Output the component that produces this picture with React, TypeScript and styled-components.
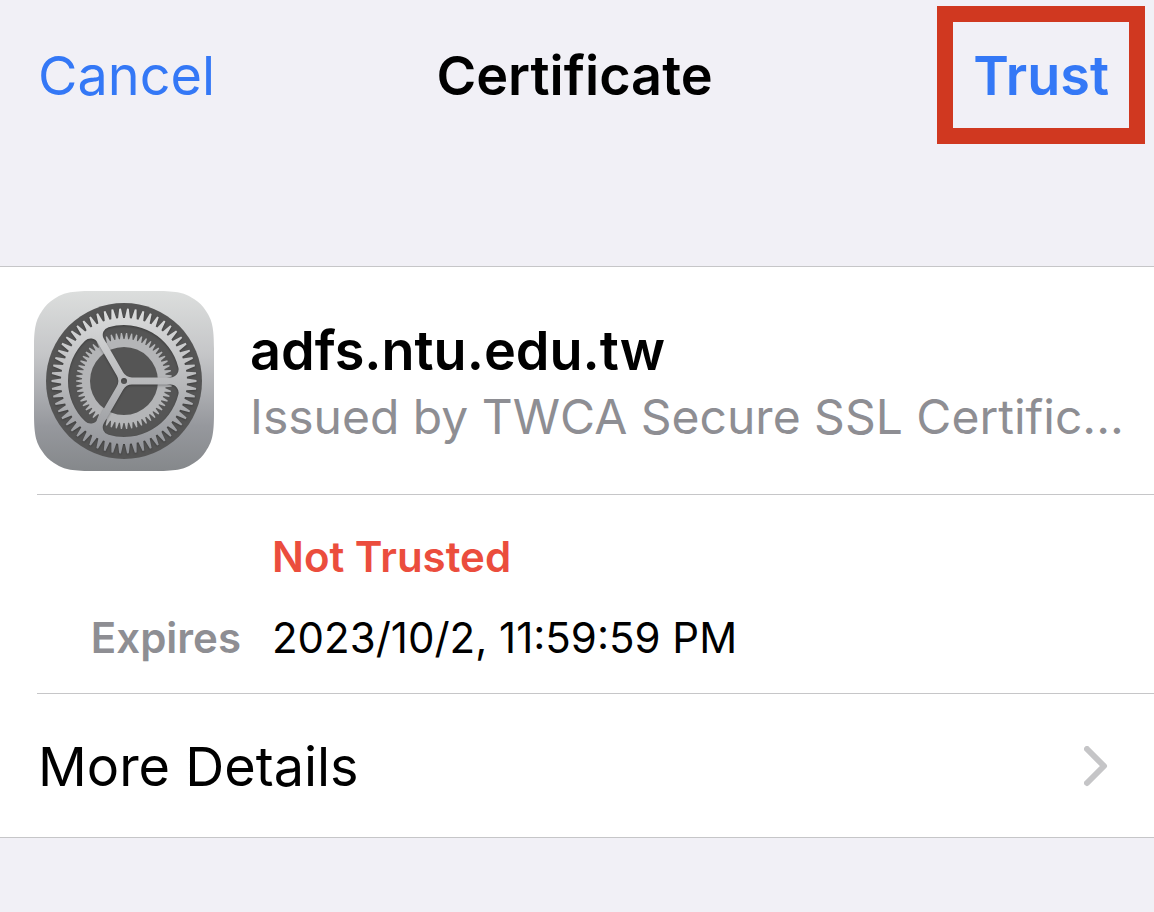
import React from "react";
import styled, { createGlobalStyle } from "styled-components";

const GlobalStyle = createGlobalStyle`
  * { box-sizing: border-box; }
  body {
    margin: 0;
    background: #f1f0f6;
    color: #000;
    font-family: Inter, "Liberation Sans", sans-serif;
  }
  button {
    font: inherit;
    border: 0;
    padding: 0;
    background: none;
    cursor: pointer;
  }
  h1, h2, p, dl, dd { margin: 0; }
`;

const Page = styled.main`
  min-height: 100vh;
`;

const NavBar = styled.header`
  display: grid;
  grid-template-columns: 1fr auto 1fr;
  align-items: center;
  padding: 6px 9px 122px 4px;
  font-size: 54px;
  line-height: 68px;
`;

const NavTitle = styled.h1`
  padding-top: 2px;
  font-size: 54px;
  font-weight: 600;
`;

const CancelButton = styled.button`
  && {
    justify-self: start;
    padding: 2px 0 0 34px;
    color: #3478f6;
  }
`;

const TrustButton = styled.button`
  && {
    justify-self: end;
    padding: 20px 20px 18px;
    border: 16px solid #d03820;
    color: #3478f6;
    font-weight: 600;
  }
`;

const Card = styled.section`
  background: #fff;
  border: solid #c6c6c8;
  border-width: 1px 0;
`;

const Summary = styled.div`
  display: flex;
  align-items: center;
  gap: 36px;
  padding: 24px 24px 23px 34px;
`;

const SummaryText = styled.div`
  min-width: 0;
  flex: 1;
  padding-top: 4px;
`;

const Host = styled.h2`
  font-size: 54px;
  line-height: 68px;
  font-weight: 600;
`;

const Issuer = styled.p`
  overflow: hidden;
  color: #8e8e93;
  font-size: 48px;
  line-height: 64px;
  text-overflow: ellipsis;
  white-space: nowrap;
`;

const Facts = styled.dl`
  display: grid;
  grid-template-columns: 204px 1fr;
  column-gap: 31px;
  row-gap: 29px;
  margin-left: 37px;
  padding: 36px 0 29px;
  border: solid #c6c6c8;
  border-width: 1px 0;
  font-size: 42px;
  line-height: 52px;
`;

const FactName = styled.dt`
  color: #8e8e93;
  font-weight: 600;
  text-align: right;
`;

const FactValue = styled.dd<{ $alert?: boolean }>`
  grid-column: 2;
  color: ${(p) => (p.$alert ? "#eb4d3d" : "#000")};
  font-weight: ${(p) => (p.$alert ? 600 : 400)};
`;

const MoreButton = styled.button`
  && {
    display: flex;
    align-items: center;
    justify-content: space-between;
    width: 100%;
    padding: 39px 46px 36px 38px;
    font-size: 54px;
    line-height: 68px;
    text-align: left;
  }
`;

const rad = (deg: number) => (deg * Math.PI) / 180;
const point = (r: number, deg: number) =>
  `${(r * Math.cos(rad(deg))).toFixed(2)} ${(r * Math.sin(rad(deg))).toFixed(2)}`;

/** Outline of a toothed wheel: `root` and `tip` are radii, the halves are angles. */
function wheel(count: number, root: number, tip: number, rootHalf: number, tipHalf: number) {
  const points: string[] = [];
  for (let i = 0; i < count; i++) {
    const a = (i * 360) / count;
    points.push(
      point(root, a - rootHalf),
      point(tip, a - tipHalf),
      point(tip, a + tipHalf),
      point(root, a + rootHalf)
    );
  }
  return `M${points.join("L")}Z`;
}

const circle = (r: number) => `M${r} 0A${r} ${r} 0 1 0 ${-r} 0A${r} ${r} 0 1 0 ${r} 0Z`;

/** A window between two spokes, turned by `deg`. */
function opening(deg: number) {
  const R = 56;
  const d = 3.6;
  const r = 8;
  const cx = Math.sqrt((R - r) ** 2 - (d + r) ** 2);
  const corner = (Math.atan2(d + r, cx) * 180) / Math.PI;
  const at = (x: number, y: number) => point(Math.hypot(x, y), (Math.atan2(y, x) * 180) / Math.PI + deg);
  const mirror = (x: number, y: number) =>
    point(Math.hypot(x, y), -120 - (Math.atan2(y, x) * 180) / Math.PI + deg);
  return [
    `M${at(8, -d)}L${at(cx, -d)}`,
    `A${r} ${r} 0 0 0 ${point(R, -corner + deg)}`,
    `A${R} ${R} 0 0 0 ${point(R, corner - 120 + deg)}`,
    `A${r} ${r} 0 0 0 ${mirror(cx, -d)}`,
    `L${mirror(8, -d)}Q${at(d / Math.tan(rad(60)), -d)} ${at(8, -d)}Z`,
  ].join("");
}

const outerWheel = wheel(58, 63, 72.5, 2.3, 0.7) + [0, 120, 240].map(opening).join("") + circle(3);
const innerWheel = wheel(58, 42, 48, 2.4, 0.7) + circle(34);

const SettingsIcon = () => (
  <svg width="180" height="180" viewBox="0 0 180 180" aria-hidden="true">
    <defs>
      <linearGradient id="tile" x1="0" y1="0" x2="0" y2="1">
        <stop offset="0" stopColor="#dcdedd" />
        <stop offset="0.35" stopColor="#c5c6c8" />
        <stop offset="0.75" stopColor="#96989d" />
        <stop offset="1" stopColor="#85888b" />
      </linearGradient>
      <linearGradient id="metal" gradientUnits="userSpaceOnUse" x1="0" y1="-73" x2="0" y2="73">
        <stop offset="0" stopColor="#dcdddd" />
        <stop offset="0.5" stopColor="#b9babc" />
        <stop offset="1" stopColor="#909297" />
      </linearGradient>
      <filter id="shade" x="-10%" y="-10%" width="120%" height="120%" colorInterpolationFilters="sRGB">
        <feDropShadow dx="0" dy="1" stdDeviation="1" floodColor="#000" floodOpacity="0.3" />
      </filter>
    </defs>
    <path
      d="M58 0H122C144 0 151 2 160 8C165 11 169 15 172 20C178 29 180 36 180 58V122C180 144 178 151 172 160C169 165 165 169 160 172C151 178 144 180 122 180H58C36 180 29 178 20 172C15 169 11 165 8 160C2 151 0 144 0 122V58C0 36 2 29 8 20C11 15 15 11 20 8C29 2 36 0 58 0Z"
      fill="url(#tile)"
    />
    <g transform="translate(90 90)" fillRule="evenodd">
      <circle r="78" fill="#555" />
      <path d={innerWheel} fill="#b4b5b7" />
      <path d={outerWheel} fill="url(#metal)" filter="url(#shade)" />
    </g>
  </svg>
);

const Chevron = () => (
  <svg width="24" height="42" viewBox="0 0 24 42" aria-hidden="true">
    <path d="M3 3L20 20L3 37" fill="none" stroke="#c5c5c7" strokeWidth="6" strokeLinecap="round" strokeLinejoin="round" />
  </svg>
);

export default function App() {
  return (
    <Page>
      <GlobalStyle />
      <NavBar>
        <CancelButton type="button">Cancel</CancelButton>
        <NavTitle>Certificate</NavTitle>
        <TrustButton type="button">Trust</TrustButton>
      </NavBar>
      <Card>
        <Summary>
          <SettingsIcon />
          <SummaryText>
            <Host>adfs.ntu.edu.tw</Host>
            <Issuer>Issued by TWCA Secure SSL Certific...</Issuer>
          </SummaryText>
        </Summary>
        <Facts>
          <FactValue $alert>Not Trusted</FactValue>
          <FactName>Expires</FactName>
          <FactValue>2023/10/2, 11:59:59 PM</FactValue>
        </Facts>
        <MoreButton type="button">
          More Details
          <Chevron />
        </MoreButton>
      </Card>
    </Page>
  );
}
